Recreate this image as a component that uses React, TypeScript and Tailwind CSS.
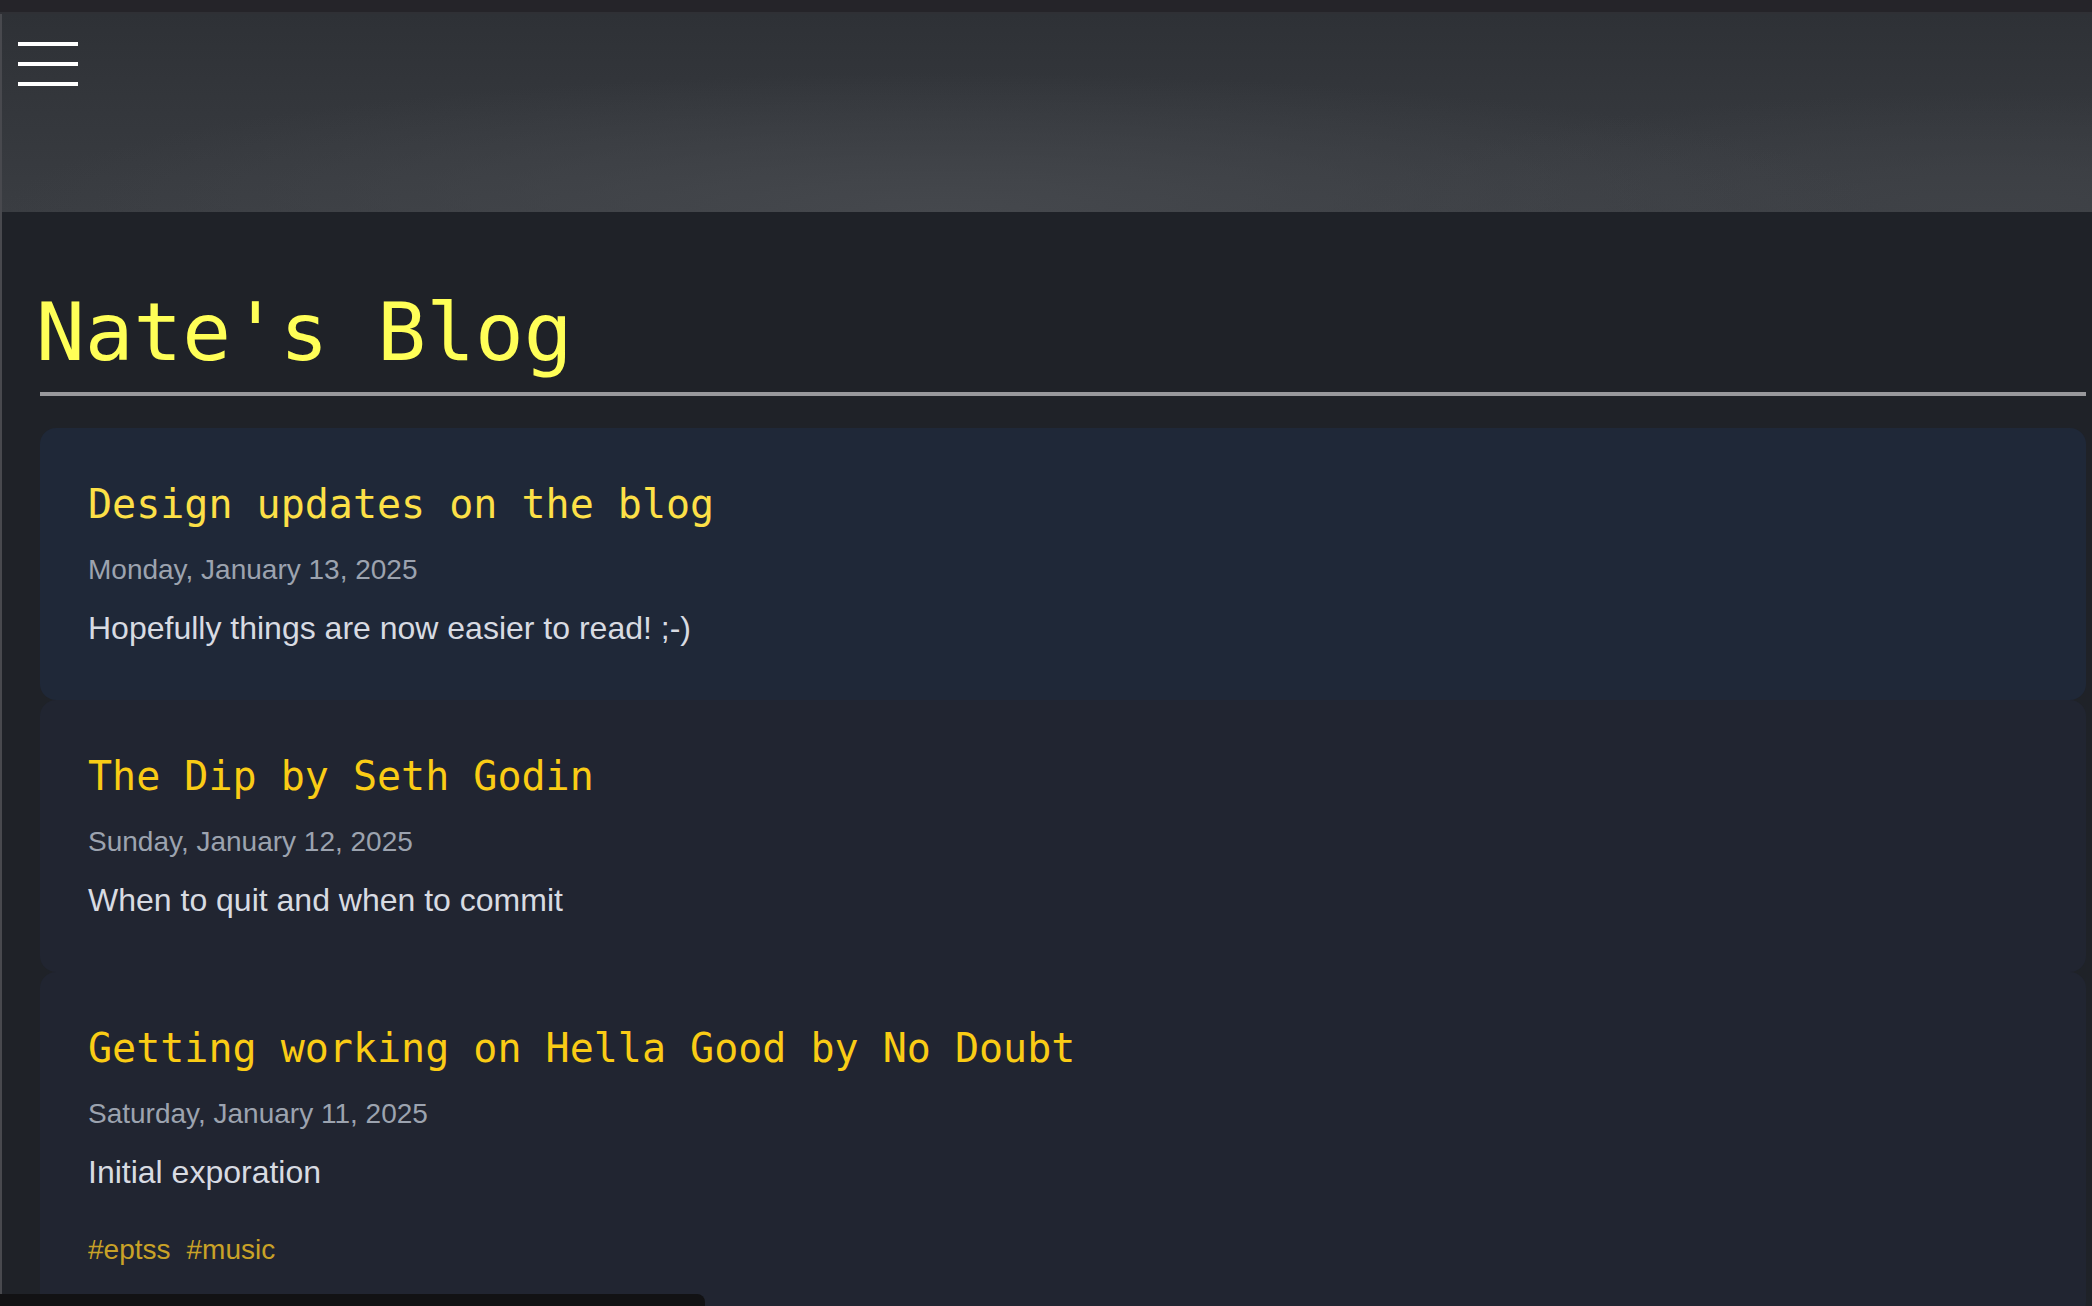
import React from "react";

type Post = {
  title: string;
  date: string;
  summary: string;
  tags?: string[];
  active?: boolean;
};

const posts: Post[] = [
  {
    title: "Design updates on the blog",
    date: "Monday, January 13, 2025",
    summary: "Hopefully things are now easier to read! ;-)",
    active: true,
  },
  {
    title: "The Dip by Seth Godin",
    date: "Sunday, January 12, 2025",
    summary: "When to quit and when to commit",
  },
  {
    title: "Getting working on Hella Good by No Doubt",
    date: "Saturday, January 11, 2025",
    summary: "Initial exporation",
    tags: ["#eptss", "#music"],
  },
];

function PostCard({ post }: { post: Post }) {
  return (
    <article
      className={
        post.active
          ? "min-h-[272px] shrink-0 rounded-[16px] bg-[#1f2838] p-[48px]"
          : "min-h-[272px] shrink-0 rounded-[16px] bg-[#212531] p-[48px]"
      }
    >
      <h2
        className={
          post.active
            ? "font-['DejaVu_Sans_Mono',monospace] text-[40px] leading-[56px] text-[#fde047]"
            : "font-['DejaVu_Sans_Mono',monospace] text-[40px] leading-[56px] text-[#facc15]"
        }
      >
        {post.title}
      </h2>
      <p className="mt-[18px] text-[28px] leading-[40px] text-[#9ca3af]">{post.date}</p>
      <p className="mt-[14px] text-[32px] leading-[48px] text-[#d8dbe2]">{post.summary}</p>
      {post.tags && (
        <div className="mt-[34px] flex gap-[16px] text-[28px] leading-[40px] text-[#c9a227]">
          {post.tags.map((t) => (
            <span key={t}>{t}</span>
          ))}
        </div>
      )}
    </article>
  );
}

export default function App() {
  return (
    <div className="relative flex h-[1306px] w-full flex-col overflow-hidden bg-[#1f2228] font-['Liberation_Sans',Arial,sans-serif]">
      <div className="h-[14px] shrink-0 border-b-2 border-[#2f3035] bg-[#252429]" />
      <div className="flex min-h-0 flex-1 flex-col border-l-2 border-[#48494e]">
        <header className="h-[198px] shrink-0 bg-[radial-gradient(ellipse_45%_70%_at_45%_100%,#45484d_0%,rgba(69,72,77,0)_100%),radial-gradient(ellipse_30%_60%_at_95%_100%,#3f4247_0%,rgba(63,66,71,0)_100%),linear-gradient(180deg,#2e3136_0%,#3a3d42_100%)] pl-[16px] pt-[28px]">
          <button className="flex w-[60px] flex-col gap-[16px]" aria-label="menu">
            <span className="block h-[4px] w-[60px] bg-white" />
            <span className="block h-[4px] w-[60px] bg-white" />
            <span className="block h-[4px] w-[60px] bg-white" />
          </button>
        </header>
        <main className="flex min-h-0 flex-1 flex-col pl-[38px] pr-[6px]">
          <h1 className="mt-[72px] -ml-[4px] font-['DejaVu_Sans_Mono',monospace] text-[81px] leading-[96px] text-[#ffff57]">
            Nate's Blog
          </h1>
          <div className="mt-[12px] h-[4px] shrink-0 bg-[#98989c]" />
          <div className="mt-[32px] flex flex-col">
            {posts.map((p) => (
              <PostCard key={p.title} post={p} />
            ))}
          </div>
        </main>
      </div>
      <div className="absolute bottom-0 left-0 h-[12px] w-[705px] rounded-tr-[8px] bg-[#121214]" />
    </div>
  );
}
